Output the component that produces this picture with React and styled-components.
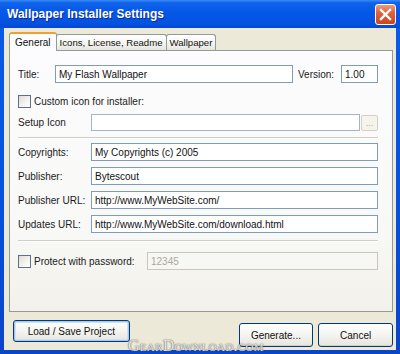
import React from 'react'
import styled, { createGlobalStyle } from 'styled-components'

const GlobalStyle = createGlobalStyle`
  html, body {
    margin: 0;
    padding: 0;
    background: #ffffff;
  }
  body {
    font-family: "Liberation Sans", Arial, sans-serif;
  }
`

const SWindow = styled.div`
  position: relative;
  width: 400px;
  height: 354px;
  display: flex;
  flex-direction: column;
  background: linear-gradient(180deg, #0a5ce8 0%, #0650dc 60%, #0a45c8 100%);
  overflow: hidden;
`

const STitleBar = styled.div`
  flex: none;
  height: 28px;
  display: flex;
  align-items: center;
  justify-content: space-between;
  padding: 0 4px 0 7px;
  background: linear-gradient(180deg, #3b8cf6 0%, #0f63ea 10%, #0557e6 45%, #0353e2 80%, #0548d0 100%);
`

const STitle = styled.span`
  color: #ffffff;
  font-weight: bold;
  font-size: 12px;
  text-shadow: 1px 1px 0 #0a2a8a;
`

const SClose = styled.div`
  width: 21px;
  height: 21px;
  box-sizing: border-box;
  border: 1px solid #ffffff;
  border-radius: 3px;
  background: linear-gradient(180deg, #f09a7c 0%, #e2603c 40%, #cc4420 100%);
  display: flex;
  align-items: center;
  justify-content: center;
`

const SBody = styled.div`
  flex: 1;
  margin: 0 4px 4px 4px;
  padding: 4px 3px 0 5px;
  background: #ece9d8;
  display: flex;
  flex-direction: column;
`

const STabStrip = styled.div`
  display: flex;
  align-items: flex-end;
  height: 18px;
  position: relative;
  z-index: 1;
`

const STab = styled.div`
  height: ${p => (p.$active ? '19px' : '16px')};
  margin-bottom: ${p => (p.$active ? '-1px' : '0')};
  box-sizing: border-box;
  padding: 0 ${p => (p.$active ? '5px' : '3px')};
  display: flex;
  align-items: center;
  font-size: ${p => (p.$active ? '10px' : '9.6px')};
  color: #111;
  border: 1px solid #919b9c;
  border-bottom: none;
  border-top: ${p => (p.$active ? '2px solid #f0a030' : '1px solid #919b9c')};
  border-radius: 3px 3px 0 0;
  background: ${p => (p.$active ? '#fcfcfe' : 'linear-gradient(180deg, #ffffff 0%, #f3f3ef 60%, #e6e5de 100%)')};
  margin-left: ${p => (p.$active ? '0' : '-1px')};
`

const SPanel = styled.div`
  flex: none;
  height: 262px;
  box-sizing: border-box;
  border: 1px solid #919b9c;
  background: linear-gradient(180deg, #fcfcfe 0%, #f8f8f6 70%, #f2f1ea 100%);
  padding: 14px 14px 0 8px;
  display: flex;
  flex-direction: column;
`

const STitleRow = styled.div`
  display: flex;
  align-items: center;
  height: 18px;
`

const SFieldRow = styled.div`
  display: grid;
  grid-template-columns: 73px 1fr;
  align-items: center;
  height: ${p => p.$h || 18}px;
  margin-top: ${p => p.$mt || 0}px;
`

const SCheckRow = styled.label`
  display: flex;
  align-items: center;
  gap: 3px;
  height: ${p => p.$h || 13}px;
  margin-top: ${p => p.$mt || 0}px;
  font-size: 10px;
  color: #1a1a1a;
`

const SLabel = styled.span`
  font-size: 10px;
  color: #1a1a1a;
  width: ${p => (p.$w ? `${p.$w}px` : 'auto')};
  margin-left: ${p => p.$ml || 0}px;
  flex: none;
  white-space: nowrap;
`

const SInput = styled.div`
  height: ${p => p.$h || 18}px;
  box-sizing: border-box;
  border: 1px solid ${p => (p.$disabled ? '#c9c7ba' : p.$soft ? '#a5b4c4' : '#7f9db9')};
  background: ${p => (p.$disabled ? '#f7f7f4' : '#ffffff')};
  color: ${p => (p.$disabled ? '#aca899' : '#111')};
  font-size: 10px;
  padding: 0 3px;
  display: flex;
  align-items: center;
  white-space: nowrap;
  overflow: hidden;
  flex: ${p => (p.$w ? 'none' : '1')};
  width: ${p => (p.$w ? `${p.$w}px` : 'auto')};
  min-width: 0;
`

const SBrowse = styled.div`
  width: 17px;
  height: 16px;
  box-sizing: border-box;
  border: 1px solid #d2d0c4;
  border-radius: 2px;
  background: #f5f4ea;
  color: #aca899;
  font-size: 9px;
  display: flex;
  align-items: center;
  justify-content: center;
  flex: none;
`

const SInline = styled.div`
  display: flex;
  align-items: center;
  gap: 1px;
`

const SSeparator = styled.div`
  height: 0;
  border-top: 1px solid #d0cfc4;
  border-bottom: 1px solid #ffffff;
  margin-top: ${p => p.$mt}px;
`

const SCheck = styled.span`
  width: 13px;
  height: 13px;
  box-sizing: border-box;
  border: 1px solid #5f6f86;
  background: linear-gradient(135deg, #dcdcd7 0%, #f4f4f0 60%, #ffffff 100%);
  flex: none;
`

const SButtonRow = styled.div`
  display: flex;
  align-items: flex-start;
  padding: 0 0 0 4px;
  margin-top: ${p => p.$mt}px;
`

const SButton = styled.div`
  height: ${p => p.$h}px;
  width: ${p => p.$w}px;
  margin-top: ${p => p.$mt || 0}px;
  margin-left: ${p => p.$ml || 0}px;
  box-sizing: border-box;
  border: 1px solid #003c74;
  border-radius: 3px;
  background: linear-gradient(180deg, #ffffff 0%, #f4f4f0 50%, #e6e5de 100%);
  box-shadow: ${p => (p.$focus ? 'inset 0 0 0 1px #a8c6f2, inset 0 0 0 2px #cfe0f8' : 'inset 0 -1px 0 #d6d0c5')};
  font-size: 10px;
  color: #111;
  display: flex;
  align-items: center;
  justify-content: center;
`

const SWatermark = styled.div`
  position: absolute;
  left: 128px;
  top: 338px;
  line-height: 16px;
  font-family: "Liberation Serif", "Times New Roman", serif;
  font-variant: small-caps;
  font-size: 16px;
  letter-spacing: 0.3px;
  color: rgba(255, 255, 255, 0.85);
  text-shadow: 0 0 1px rgba(60, 60, 60, 0.9), 0 0 2px rgba(90, 90, 90, 0.6);
  pointer-events: none;
`

const fields = [
  { label: 'Copyrights:', value: 'My Copyrights (c) 2005' },
  { label: 'Publisher:', value: 'Bytescout' },
  { label: 'Publisher URL:', value: 'http://www.MyWebSite.com/' },
  { label: 'Updates URL:', value: 'http://www.MyWebSite.com/download.html' },
]

const CloseIcon = () => (
  <svg width="13" height="13" viewBox="0 0 13 13">
    <path d="M2 2 L11 11 M11 2 L2 11" stroke="#ffffff" strokeWidth="2.4" strokeLinecap="square" />
  </svg>
)

const App = () => (
  <SWindow>
    <GlobalStyle />
    <STitleBar>
      <STitle>Wallpaper Installer Settings</STitle>
      <SClose><CloseIcon /></SClose>
    </STitleBar>
    <SBody>
      <STabStrip>
        <STab $active>General</STab>
        <STab>Icons, License, Readme</STab>
        <STab>Wallpaper</STab>
      </STabStrip>
      <SPanel>
        <STitleRow>
          <SLabel $w={37}>Title:</SLabel>
          <SInput>My Flash Wallpaper</SInput>
          <SLabel $w={43} $ml={5}>Version:</SLabel>
          <SInput $w={37}>1.00</SInput>
        </STitleRow>

        <SCheckRow $mt={12}>
          <SCheck />
          Custom icon for installer:
        </SCheckRow>

        <SFieldRow $mt={6} $h={17}>
          <SLabel>Setup Icon</SLabel>
          <SInline>
            <SInput $h={17} $soft />
            <SBrowse>...</SBrowse>
          </SInline>
        </SFieldRow>

        <SSeparator $mt={6} />

        {fields.map((f, i) => (
          <SFieldRow key={f.label} $mt={i === 0 ? 4 : 6}>
            <SLabel>{f.label}</SLabel>
            <SInput>{f.value}</SInput>
          </SFieldRow>
        ))}

        <SSeparator $mt={7} />

        <SCheckRow $mt={10} $h={18}>
          <SCheck />
          <SLabel $w={110}>Protect with password:</SLabel>
          <SInput $disabled>12345</SInput>
        </SCheckRow>
      </SPanel>

      <SButtonRow $mt={8}>
        <SButton $w={117} $h={22} $focus>Load / Save Project</SButton>
        <SButton $w={75} $h={24} $mt={3} $ml={109}>Generate...</SButton>
        <SButton $w={75} $h={24} $mt={3} $ml={5}>Cancel</SButton>
      </SButtonRow>
    </SBody>
    <SWatermark>GearDownload.com</SWatermark>
  </SWindow>
)

export default App
